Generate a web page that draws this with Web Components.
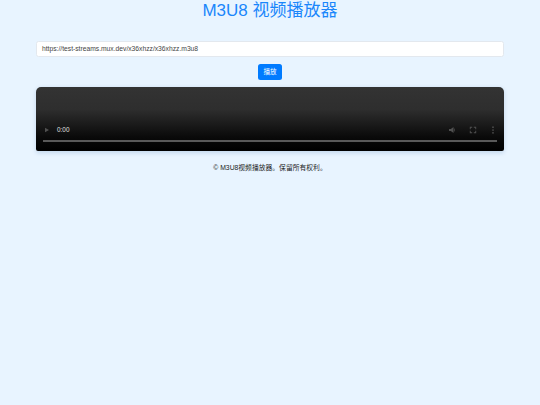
<!DOCTYPE html>
<html lang="zh">
<head>
<meta charset="utf-8">
<title>M3U8 视频播放器</title>
<style>
    html, body {
        margin: 0;
        height: 100%;
        background: #e8f4ff;
        font-family: "Liberation Sans", "Noto Sans CJK SC", sans-serif;
    }
</style>
</head>
<body>
<player-page>
    <span slot="title">M3U8 视频播放器</span>
    <url-bar slot="bar" value="https://test-streams.mux.dev/x36xhzz/x36xhzz.m3u8" label="播放"></url-bar>
    <video-box slot="video" time="0:00"></video-box>
    <span slot="footer">© M3U8视频播放器。保留所有权利。</span>
</player-page>

<script>
(function () {
    class PlayerPage extends HTMLElement {
        constructor() {
            super();
            this.attachShadow({ mode: "open" });
            this.shadowRoot.innerHTML = `
                <style>
                    :host {
                        display: block;
                        padding: 0 36px;
                    }

                    h1 {
                        margin: 0;
                        height: 41px;
                        color: #1a86fb;
                        font-size: 17px;
                        font-weight: 400;
                        line-height: 21px;
                        text-align: center;
                    }

                    footer {
                        margin-top: 12px;
                        color: #222;
                        font-size: 6.8px;
                        line-height: 10px;
                        text-align: center;
                    }
                </style>
                <h1><slot name="title"></slot></h1>
                <slot name="bar"></slot>
                <slot name="video"></slot>
                <footer><slot name="footer"></slot></footer>
            `;
        }
    }

    class UrlBar extends HTMLElement {
        constructor() {
            super();
            this.attachShadow({ mode: "open" });
            this.shadowRoot.innerHTML = `
                <style>
                    :host {
                        display: flex;
                        flex-direction: column;
                        align-items: center;
                        gap: 7px;
                        margin-bottom: 7px;
                    }

                    .field {
                        box-sizing: border-box;
                        width: 100%;
                        height: 16px;
                        padding: 0 5px;
                        background: #fff;
                        border: 1px solid #e3e8ee;
                        border-radius: 2.5px;
                        color: #444;
                        font-size: 6.73px;
                        line-height: 14px;
                    }

                    .go {
                        width: 24px;
                        height: 16px;
                        background: #007bff;
                        border-radius: 2.5px;
                        color: #fff;
                        font-size: 6.6px;
                        line-height: 16px;
                        text-align: center;
                    }
                </style>
                <div class="field">${this.getAttribute("value")}</div>
                <div class="go">${this.getAttribute("label")}</div>
            `;
        }
    }

    class VideoBox extends HTMLElement {
        constructor() {
            super();
            this.attachShadow({ mode: "open" });
            this.shadowRoot.innerHTML = `
                <style>
                    :host {
                        display: block;
                    }

                    .screen {
                        box-sizing: border-box;
                        display: flex;
                        flex-direction: column;
                        justify-content: flex-end;
                        height: 64px;
                        padding: 0 7px 9.5px;
                        background: linear-gradient(#333 0%, #2e2e2e 35%, #0a0a0a 78%, #000 100%);
                        border-radius: 5px 5px 2px 2px;
                        box-shadow: 0 1.5px 4px rgba(0, 70, 140, 0.16);
                    }

                    .controls {
                        display: flex;
                        align-items: center;
                        height: 10px;
                        margin-bottom: 5.5px;
                    }

                    .time {
                        flex: 1;
                        margin-left: 5px;
                        color: #e0e0e0;
                        font-size: 6.4px;
                        line-height: 10px;
                    }

                    svg {
                        display: block;
                        width: 8px;
                        height: 8px;
                        fill: #505050;
                    }

                    .play {
                        margin-left: 1px;
                    }

                    .sound {
                        margin-right: 12px;
                    }

                    .full {
                        margin-right: 12px;
                    }

                    .track {
                        height: 1.5px;
                        background: #595959;
                    }
                </style>
                <div class="screen">
                    <div class="controls">
                        <svg class="play" viewBox="0 0 8 8"><path d="M1 1.7 5 4 1 6.300z"/></svg>
                        <span class="time">${this.getAttribute("time")}</span>
                        <svg class="sound" viewBox="0 0 8 8"><path d="M0 3h1.8L4.500 1v6L1.800 5H0z"/><path d="M5.200 2.300a2.400 2.400 0 0 1 0 3.400l-.4-.5a1.700 1.700 0 0 0 0-2.400z"/></svg>
                        <svg class="full" viewBox="0 0 8 8"><path d="M.8.800h2.400v.9H1.700v1.500H.8zM4.800.800h2.400v2.400h-.9V1.700H4.800zM.8 4.800h.9v1.500h1.500v.9H.8zM6.300 4.800h.9v2.400H4.800v-.9h1.500z"/></svg>
                        <svg viewBox="0 0 8 8"><circle cx="4" cy="1.200" r=".85"/><circle cx="4" cy="4" r=".85"/><circle cx="4" cy="6.800" r=".85"/></svg>
                    </div>
                    <div class="track"></div>
                </div>
            `;
        }
    }

    customElements.define("player-page", PlayerPage);
    customElements.define("url-bar", UrlBar);
    customElements.define("video-box", VideoBox);
})();
</script>
</body>
</html>
